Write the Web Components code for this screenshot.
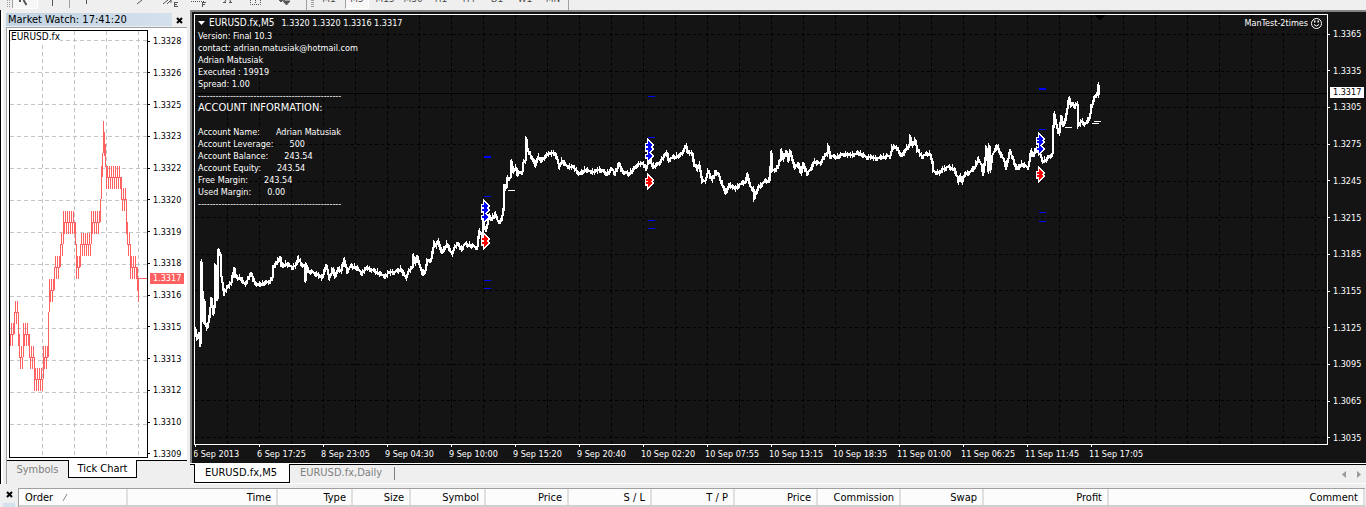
<!DOCTYPE html>
<html lang="en">
<head>
<meta charset="utf-8">
<title>EURUSD.fx,M5</title>
<style>
  html, body { height: 100%; }
  body {
    margin: 0;
    display: flex;
    flex-direction: column;
    overflow: hidden;
    background: #efefef;
    color: #000;
    font: 11px/14px "DejaVu Sans Condensed", "DejaVu Sans", sans-serif;
    --small: 9px;
    --tick: #ff6060;
    --chart: #141414;
  }
  .workspace { flex: 1; min-height: 0; display: flex; }
</style>
</head>
<body>
  <tool-bar></tool-bar>
  <div class="workspace">
    <market-watch time="17:41:20">
      <tick-chart symbol="EURUSD.fx"></tick-chart>
    </market-watch>
    <chart-window symbol="EURUSD.fx,M5" expert="ManTest-2times">
      <account-info slot="info"></account-info>
    </chart-window>
  </div>
  <terminal-panel></terminal-panel>

<script>
  const svgLine = (x, y1, y2) => `M${x} ${y1}V${y2}`;

  // main toolbar, only its lower edge is on screen
  class ToolBar extends HTMLElement {
    constructor() {
      super();
      this.attachShadow({ mode: "open" });
      const frames = ["M1", "M5", "M15", "M30", "H1", "H4", "D1", "W1", "MN"];
      this.shadowRoot.innerHTML = `
        <style>
          :host { display: flex; align-items: flex-end; height: 10px; flex: none; overflow: hidden; background: #efefef; }
          button {
            flex: none; box-sizing: border-box; width: 24px; height: 24px; margin: 0 0 1px; padding: 4px 0 0;
            border: 1px solid transparent; background: none; color: #555; font: inherit; font-size: 10px; line-height: 12px;
          }
          .frames { display: flex; gap: 4px; padding-right: 3px; }
          button.on { border-color: #a0a0a0 #fff #fff #a0a0a0; background: #f7f7f7; }
          .tools { display: flex; align-items: flex-end; width: 301px; padding-left: 5px; border-right: 1px solid #a0a0a0; height: 100%; }
          svg { display: block; }
          .grip { width: 3px; height: 7px; margin: 0 3px 3px 4px; background: repeating-linear-gradient(#a0a0a0 0 1px, transparent 1px 2px); }
          .end { width: 1px; height: 10px; background: #a0a0a0; }
        </style>
        <div class="tools">
          <svg width="300" height="10" fill="none" stroke="#555" role="img" aria-label="Drawing tools">
            <path d="M2.500 0v8M4.500 0v8" stroke="#a0a0a0" stroke-dasharray="1 1"/>
            <rect x="7" y="-3" width="25" height="11" fill="#f7f7f7" stroke="none"/>
            <path d="M7.500 0v8" stroke="#a0a0a0"/><path d="M8 8.500h24.500V0" stroke="#fff"/>
            <path d="M15 0v2M18.500 0l3 5" stroke-width="2"/>
            <path d="M47.500 0v6M81.500 0v4"/>
            <path d="M64.500 0v8" stroke="#a0a0a0"/>
            <path d="M132 4l5-4M158 4l5-4M162 4l4-4M166 0v3"/>
            <path d="M169.500 2v5M169 2.500h4M169 4.500h3M169 6.500h4"/>
            <path d="M186 1.500h13" stroke-dasharray="1 1"/>
            <path d="M197.500 2v5M197 2.500h4M197 4.500h3"/>
            <path d="M219 3l2-3M225 0l1 3M218 2.500h3M224 2.500h3"/>
            <path d="M245.500 0v4.500h10V0M250.500 0v3" stroke-dasharray="1 1"/>
            <path d="M274 0l2 2 2-2M278 0h2M278 1h7l-3.500 4z" fill="#555"/>
          </svg>
        </div>
        <span class="grip"></span>
        <div class="frames">${frames.map(f =>
          `<button type="button"${f === "M5" ? ' class="on"' : ""}>${f}</button>`).join("")}</div>
        <span class="end"></span>
      `;
    }
  }
  customElements.define("tool-bar", ToolBar);

  class MarketWatch extends HTMLElement {
    constructor() {
      super();
      this.attachShadow({ mode: "open" });
      this.shadowRoot.innerHTML = `
        <style>
          :host {
            display: flex; flex-direction: column; box-sizing: border-box; width: 190px; flex: none;
            padding: 3px 3px 0 5px; border-left: 1px solid #000; background: #efefef;
            box-shadow: inset 2px 0 #fff;
          }
          header { display: flex; height: 14px; }
          h2 { margin: 0; padding-left: 2px; flex: 1; font: inherit; line-height: 13px; height: 13px; background: linear-gradient(90deg, #c2d3e3, #d4e1ed); }
          header button { width: 15px; padding: 0; border: 0; background: none; }
          svg { display: block; margin: auto; }
          .body { flex: 1; min-height: 0; display: flex; flex-direction: column; background: #fff; border: solid #a0a0a0; border-width: 1px 0 0 1px; }
          nav { display: flex; height: 23px; background: #efefef; border-top: 1px solid #000; }
          nav button {
            box-sizing: border-box; height: 18px; margin: -1px 0 0; padding: 0;
            border: 1px solid transparent; border-top: 0; background: none; color: #808080; font: inherit; white-space: nowrap;
          }
          nav button:first-child { width: 61px; padding-top: 2px; }
          nav button.on { width: 69px; border-color: #000; background: #fff; color: #000; }
        </style>
        <header>
          <h2>Market Watch: ${this.getAttribute("time")}</h2>
          <button type="button" aria-label="Close">
            <svg width="7" height="7" stroke="#000" stroke-width="2"><path d="M1 1l5 5M6 1l-5 5"/></svg>
          </button>
        </header>
        <div class="body">
          <slot></slot>
          <nav><button type="button">Symbols</button><button type="button" class="on">Tick Chart</button></nav>
        </div>
      `;
    }
  }
  customElements.define("market-watch", MarketWatch);

  // column of prices with a tick mark before each, and a tag on the current price
  class PriceAxis extends HTMLElement {
    constructor() {
      super();
      this.attachShadow({ mode: "open" });
      const prices = this.getAttribute("prices").split(" ");
      this.shadowRoot.innerHTML = `
        <style>
          :host { display: flex; flex-direction: column; justify-content: space-between; position: relative; font-size: var(--small); line-height: 12px; }
          div { display: flex; align-items: center; }
          div::before { content: ""; width: 2px; height: 1px; margin-right: 3px; background: currentColor; }
          span {
            position: absolute; left: 2px; top: var(--tag-top); width: 34px; box-sizing: border-box;
            padding-left: 3px; line-height: 11px; background: var(--tag); color: var(--tag-text);
          }
        </style>
        ${prices.map(p => `<div>${p}</div>`).join("")}
        <span>${this.getAttribute("current")}</span>
      `;
    }
  }
  customElements.define("price-axis", PriceAxis);

  // [first x, last x, middle y] of each step of the tick line
  const TICKS = [
    [0, 3, 303], [4, 7, 281], [8, 8, 303], [9, 12, 326], [13, 18, 303], [19, 23, 326],
    [24, 32, 348], [33, 37, 326], [38, 38, 281], [39, 43, 259], [44, 49, 236], [50, 52, 213],
    [53, 64, 191], [65, 65, 213], [66, 69, 236], [70, 80, 213], [81, 89, 191], [90, 90, 168],
    [91, 91, 146], [92, 92, 122], [93, 93, 101], [94, 94, 113], [95, 95, 135], [96, 110, 146],
    [111, 115, 168], [116, 116, 191], [117, 119, 213], [120, 126, 236], [127, 128, 259]
  ];

  class TickChart extends HTMLElement {
    constructor() {
      super();
      this.attachShadow({ mode: "open" });
      let bars = "";
      let last = TICKS[0][2];
      for (const [from, to, mid] of TICKS) {
        bars += `M${from + .5} ${last}V${mid}M${from} ${mid + .5}H${to + 1}`;
        for (let x = from; x <= to; x++) {
          bars += svgLine(x + .5, mid, x % 2 ? mid - 11 : mid + 12);
        }
        last = mid;
      }
      bars += "M128.500 259V247.500H137";
      let grid = "";
      for (let x = 32; x < 137; x += 32) grid += svgLine(x + .5, 0, 427);
      for (let y = 9; y < 420; y += 32) grid += `M0 ${y + .5}H137`;
      this.shadowRoot.innerHTML = `
        <style>
          :host { display: flex; flex: 1; min-height: 0; padding: 2px 0 2px 2px; }
          .plot { position: relative; flex: 1; border: 1px solid #000; }
          svg { display: block; width: 100%; height: 100%; }
          h3 { position: absolute; left: 1px; top: 0; margin: 0; background: #fff; font: inherit; font-size: 10px; line-height: 12px; }
          price-axis { width: 39px; padding: 5px 0 0; margin-bottom: -2px; --tag: var(--tick); --tag-text: #fff; --tag-top: 243px; }
        </style>
        <div class="plot">
          <svg fill="none" shape-rendering="crispEdges">
            <path d="${grid}" stroke="#c4c4c4" stroke-dasharray="4 3"/>
            <path d="${bars}" stroke="#ff6060"/>
          </svg>
          <h3>${this.getAttribute("symbol")}</h3>
        </div>
        <price-axis current="1.3317" prices="1.3328 1.3326 1.3325 1.3323 1.3322 1.3320 1.3319 1.3318 1.3316 1.3315 1.3313 1.3312 1.3310 1.3309"></price-axis>
      `;
    }
  }
  customElements.define("tick-chart", TickChart);

  class AccountInfo extends HTMLElement {
    constructor() {
      super();
      this.attachShadow({ mode: "open" });
      const rule = "-".repeat(49);
      const rows = [
        ["Account Name:", "Adrian Matusiak"], ["Account Leverage:", "500"],
        ["Account Balance:", "243.54"], ["Account Equity:", "243.54"],
        ["Free Margin:", "243.54"], ["Used Margin:", "0.00"]
      ];
      this.shadowRoot.innerHTML = `
        <style>
          :host { display: block; font-size: var(--small); line-height: 12px; white-space: nowrap; }
          p, dl, dd, h3 { margin: 0; }
          h3 { font-weight: normal; font-size: 11px; margin-bottom: 12px; }
          dl div { display: flex; gap: 16px; }
        </style>
        <p>Version: Final 10.3</p>
        <p>contact: adrian.matusiak@hotmail.com</p>
        <p>Adrian Matusiak</p>
        <p>Executed : 19919</p>
        <p>Spread: 1.00</p>
        <p>${rule}</p>
        <h3>ACCOUNT INFORMATION:</h3>
        <dl>${rows.map(([k, v]) => `<div><dt>${k}</dt><dd>${v}</dd></div>`).join("")}</dl>
        <p>${rule}</p>
      `;
    }
  }
  customElements.define("account-info", AccountInfo);

  // x,y turning points of the price
  const PRICE = `195,328 197,338 199,332 200,343 201,261 202,290 203,320 204,300 205,323 207,327 209,317 211,297
    213,313 214,307 215,264 217,298 218,249 220,253 221,275 223,287 224,292 227,287 231,282 234,267 235,276 240,277
    245,283 251,273 254,280 258,284 265,282 270,280 272,277 273,267 277,261 280,256 281,265 287,263 292,266 296,264
    298,257 301,262 304,265 305,280 306,264 308,270 315,272 318,274 322,277 326,264 329,277 333,268 335,276 338,267
    341,270 344,259 347,270 351,265 357,267 362,272 367,267 373,269 380,273 386,275 388,272 393,271 398,270 401,268
    406,277 408,271 412,267 413,255 415,262 417,255 419,263 423,273 425,270 427,260 431,258 434,242 436,245 438,240
    442,252 447,243 452,253 454,247 458,243 461,248 465,243 472,245 477,246 479,230 482,235 483,222 486,228 489,215
    492,218 495,213 498,220 501,220 503,210 504,185 506,187 507,177 510,177 511,160 513,170 516,167 517,173 522,171
    523,162 525,160 526,138 527,148 530,153 533,158 535,165 538,156 542,160 545,155 548,153 555,152 557,158 559,166
    562,160 567,165 573,166 580,173 585,169 595,171 600,168 607,173 612,168 615,172 619,163 622,170 629,173 633,169
    638,163 643,163 646,167 650,158 653,166 658,163 667,152 668,159 673,156 680,155 686,145 688,152 692,152 694,163
    697,168 699,164 702,180 705,180 708,170 712,179 716,170 719,175 722,183 726,192 729,183 735,188 740,183 746,180
    747,173 750,185 753,188 754,198 758,187 765,180 769,180 771,152 772,170 777,167 780,160 781,150 783,158 786,150
    788,160 790,150 792,158 795,167 798,162 801,172 803,163 807,172 811,168 814,161 820,162 825,155 827,153 828,145
    830,155 837,156 843,153 850,154 858,152 867,156 877,157 890,155 892,146 897,147 902,155 906,148 909,145 910,136
    912,144 915,139 917,149 922,155 926,153 930,153 932,160 933,170 940,172 943,168 948,166 954,168 957,175 958,181
    960,175 962,181 965,173 970,171 975,166 978,158 981,163 983,172 985,157 986,147 988,170 989,145 990,169 992,155
    997,145 1000,152 1003,157 1006,166 1008,158 1010,150 1013,158 1017,168 1022,163 1028,166 1031,150 1033,155
    1036,148 1039,150 1042,159 1044,160 1048,157 1052,153 1053,127 1054,113 1055,118 1057,127 1059,132 1061,115
    1063,125 1065,120 1067,108 1069,97 1071,105 1073,102 1075,105 1077,103 1078,125 1082,120 1085,123 1089,118
    1091,107 1094,98 1097,92 1098,84 1099,94`.trim().split(/\s+/).map(p => p.split(",").map(Number));

  function priceBars() {
    let d = "";
    for (let i = 1; i < PRICE.length; i++) {
      const [x0, y0] = PRICE[i - 1];
      const [x1, y1] = PRICE[i];
      for (let x = x0; x < x1; x++) {
        const a = y0 + (y1 - y0) * (x - x0) / (x1 - x0);
        const b = y0 + (y1 - y0) * (x + 1 - x0) / (x1 - x0);
        const top = Math.round(Math.min(a, b));
        const bottom = Math.round(Math.max(a, b)) + 1;
        const noise = (x * x * 31 + x * 17) % 23;
        d += svgLine(x + .5, top - noise % 4, bottom + 1 + noise % 3);
        // steep moves are two pixels wide
        if (bottom - top > 3) d += svgLine(x + 1.5, top + 1, bottom);
      }
    }
    return d;
  }

  const BUYS = [[482, 206], [482, 210], [482, 217], [646, 145], [646, 149], [646, 156], [1037, 139], [1037, 142], [1037, 149]];
  const SELLS = [[482, 239], [482, 243], [646, 180], [646, 183], [1037, 173], [1037, 176]];
  const LEVELS = [[484, 156, 2], [484, 196, 1], [484, 280, 1], [484, 288, 1], [648, 96, 1], [648, 137, 1], [648, 220, 1],
    [648, 228, 1], [1039, 88, 2], [1039, 129, 1], [1039, 212, 1], [1039, 221, 1]];
  const ENTRIES = [[508, 190], [1065, 127], [1092, 123], [1094, 121]];

  class PricePlot extends HTMLElement {
    constructor() {
      super();
      this.attachShadow({ mode: "open" });
      let grid = "";
      for (let x = 32; x < 2400; x += 32) grid += svgLine(x + .5, 0, 1600);
      for (let i = 0; i < 40; i++) grid += `M0 ${Math.round(19 + i * 36.64) + .5}H2400`;
      const arrows = list => list.map(([x, y]) => `M${x} ${y - 1}h2v-3l4 4-4 4v-3h-2z`).join("");
      this.shadowRoot.innerHTML = `
        <style>
          :host { display: block; }
          svg { display: block; width: 100%; height: 100%; }
        </style>
        <svg fill="none" shape-rendering="crispEdges" role="img" aria-label="EURUSD price, 5 minutes">
          <path d="${grid}" stroke="#000" stroke-dasharray="3 3"/>
          <path d="M0 78.500H2400" stroke="#000"/>
          <path d="M899 0h12l-6 5z" fill="#000"/>
          <g transform="translate(-195 -15)">
            <path d="${priceBars()}" stroke="#fff"/>
            ${LEVELS.map(([x, y, h]) => `<rect x="${x}" y="${y}" width="7" height="${h}" fill="#00f"/>`).join("")}
            ${ENTRIES.map(([x, y]) => `<rect x="${x}" y="${y}" width="7" height="1" fill="#fff"/>`).join("")}
            <path d="${arrows(BUYS)}${arrows(SELLS)}" stroke="#fff" stroke-width="3"/>
            <path d="${arrows(BUYS)}" fill="#00f"/>
            <path d="${arrows(SELLS)}" fill="#f00"/>
          </g>
        </svg>
      `;
    }
  }
  customElements.define("price-plot", PricePlot);

  class ChartWindow extends HTMLElement {
    constructor() {
      super();
      this.attachShadow({ mode: "open" });
      const times = ["6 Sep 2013", "6 Sep 17:25", "8 Sep 23:05", "9 Sep 04:30", "9 Sep 10:00", "9 Sep 15:20",
        "9 Sep 20:40", "10 Sep 02:20", "10 Sep 07:55", "10 Sep 13:15", "10 Sep 18:35", "11 Sep 01:00",
        "11 Sep 06:25", "11 Sep 11:45", "11 Sep 17:05"];
      this.shadowRoot.innerHTML = `
        <style>
          :host { display: flex; flex-direction: column; flex: 1; min-width: 0; background: #fff; }
          .window {
            flex: 1; min-height: 0; display: flex; flex-direction: column; padding: 2px 0 0 2px;
            border: solid #848484; border-width: 2px 0 0 2px; background: var(--chart); color: #fff;
          }
          .row { flex: 1; min-height: 0; display: flex; }
          .plot { position: relative; flex: 1; min-width: 0; border: 1px solid #fff; }
          price-plot { width: 100%; height: 100%; }
          price-axis { width: 38px; padding: 14px 0 1px; --tag: #fff; --tag-text: #000; --tag-top: 73px; }
          .over { position: absolute; left: 3px; right: 5px; top: 1px; }
          header { display: flex; justify-content: space-between; height: 14px; line-height: 14px; font-size: var(--small); }
          h1 { display: flex; align-items: center; gap: 7px; margin: 0; font: inherit; }
          h1 b { font-weight: normal; font-size: 10px; }
          h1 svg { margin-right: -3px; }
          .expert { display: flex; align-items: center; gap: 3px; }
          .times { display: flex; height: 18px; overflow: hidden; font-size: var(--small); line-height: 12px; }
          .times span { position: relative; flex: 0 0 64px; white-space: nowrap; padding-top: 3px; margin-left: -1px; margin-right: 1px; }
          .times span::before { content: ""; position: absolute; left: 2px; top: 0; width: 1px; height: 2px; background: #fff; }
          nav { display: flex; height: 18px; margin-top: 1px; border-top: 1px solid #000; border-bottom: 1px solid #fff; padding-left: 4px; background: #efefef; }
          nav button {
            box-sizing: border-box; height: 19px; margin: -1px 0 0; padding: 0 0 0 10px; border: 1px solid transparent;
            border-top: 0; background: none; color: #808080; font: inherit; text-align: left; white-space: nowrap;
          }
          nav .on { width: 96px; border-color: #000; background: #fff; color: #000; }
          nav .daily { width: 104px; padding-left: 9px; }
          nav i { width: 1px; height: 13px; margin-top: 2px; background: #808080; }
          .scroll { display: flex; align-items: center; gap: 9px; margin-left: auto; padding-right: 5px; }
        </style>
        <div class="window">
          <div class="row">
            <div class="plot">
              <price-plot></price-plot>
              <div class="over">
                <header>
                  <h1>
                    <svg width="7" height="4" fill="#fff"><path d="M0 0h7l-3.500 4z"/></svg>
                    <b>${this.getAttribute("symbol")}</b>
                    <span>1.3320 1.3320 1.3316 1.3317</span>
                  </h1>
                  <span class="expert">${this.getAttribute("expert")}
                    <svg width="11" height="11" fill="none" stroke="#fff">
                      <circle cx="5.500" cy="5.500" r="5"/><path d="M3 6.500q2.500 3 5 0"/>
                      <path d="M3 3.500h1.500M6.500 3.500H8" stroke-width="2"/>
                    </svg>
                  </span>
                </header>
                <slot name="info"></slot>
              </div>
            </div>
            <price-axis current="1.3317" prices="1.3365 1.3335 1.3305 1.3275 1.3245 1.3215 1.3185 1.3155 1.3125 1.3095 1.3065 1.3035"></price-axis>
          </div>
          <div class="times">${times.map(t => `<span>${t}</span>`).join("")}</div>
        </div>
        <nav>
          <button type="button" class="on">EURUSD.fx,M5</button>
          <button type="button" class="daily">EURUSD.fx,Daily</button>
          <i></i>
          <span class="scroll">
            <svg width="5" height="7" fill="#999"><path d="M4 0v7L0 3.500z"/></svg>
            <svg width="5" height="7" fill="#999"><path d="M1 0v7l4-3.500z"/></svg>
          </span>
        </nav>
      `;
    }
  }
  customElements.define("chart-window", ChartWindow);

  class TerminalPanel extends HTMLElement {
    constructor() {
      super();
      this.attachShadow({ mode: "open" });
      const columns = [["Order", 108], ["Time", 150], ["Type", 75], ["Size", 58], ["Symbol", 75], ["Price", 83],
        ["S / L", 83], ["T / P", 83], ["Price", 83], ["Commission", 83], ["Swap", 83], ["Profit", 125], ["Comment", 0]];
      this.shadowRoot.innerHTML = `
        <style>
          :host { display: flex; flex: none; padding: 4px 1px 0 0; background: #efefef; }
          aside { width: 18px; display: flex; flex-direction: column; align-items: center; }
          aside button { padding: 0; border: 0; margin: 2px 0 5px 1px; background: none; height: 8px; line-height: 0; }
          aside::after { content: ""; flex: 1; width: 12px; background: #d3e0ee; }
          .list { flex: 1; border: solid #a0a0a0; border-width: 1px 0 0 1px; }
          table { width: 100%; border-collapse: collapse; table-layout: fixed; background: #fcfcfc; }
          th { box-sizing: border-box; height: 17px; padding: 1px 5px 0; border-right: 2px solid #e0e0e0; border-bottom: 2px solid #d0d0d0; font-weight: normal; text-align: right; white-space: nowrap; line-height: 14px; }
          th:first-child { text-align: left; padding-left: 6px; }
          th svg { margin-left: 9px; }
        </style>
        <aside>
          <button type="button" aria-label="Close">
            <svg width="7" height="7" stroke="#000" stroke-width="2"><path d="M1 1l5 5M6 1l-5 5"/></svg>
          </button>
        </aside>
        <div class="list">
          <table>
            <colgroup>${columns.map(c => c[1] ? `<col style="width:${c[1]}px">` : "<col>").join("")}</colgroup>
            <tr>${columns.map(([name], i) =>
              `<th scope="col">${name}${i ? "" : '<svg width="6" height="7" stroke="#888"><path d="M1 7l4-7"/></svg>'}</th>`).join("")}</tr>
          </table>
        </div>
      `;
    }
  }
  customElements.define("terminal-panel", TerminalPanel);
</script>
</body>
</html>
